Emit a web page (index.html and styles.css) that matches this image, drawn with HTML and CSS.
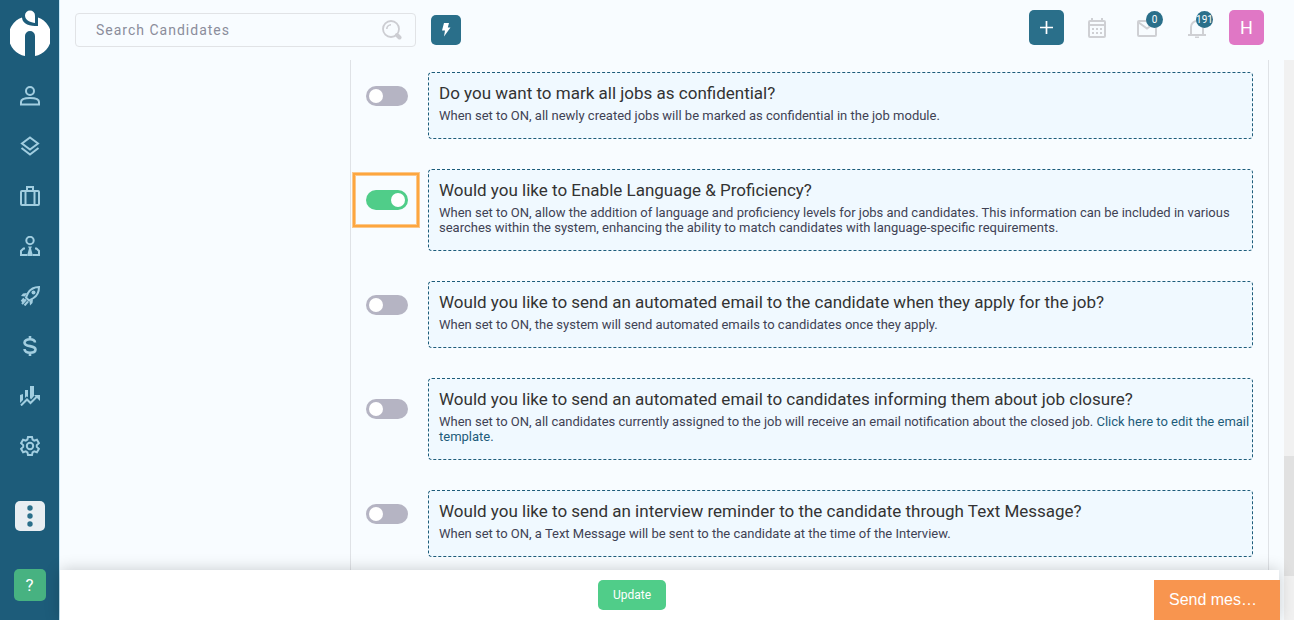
FILE: index.html
```html
<!DOCTYPE html>
<html lang="en">
<head>
  <meta charset="UTF-8">
  <meta name="viewport" content="width=device-width, initial-scale=1.0">
  <title>Settings</title>
  <link rel="stylesheet" href="styles.css">
</head>
<body>

<aside class="sidebar">
  <a class="logo" href="#" aria-label="Home">
    <svg width="40" height="46" viewBox="0 0 40 46">
      <path fill="#fff" d="M12 7.500A20 20 0 0 0 15 46V26a5 5 0 0 1 10 0v20A20 20 0 0 0 28 7.500V16C20 16 12.500 14.500 12 7.500z"/>
      <path fill="#fff" d="M20 .5a5 5 0 0 1 5 5v7.500c-4-.5-10-2.500-10-7.500a5 5 0 0 1 5-5z"/>
    </svg>
  </a>
  <nav class="menu">
    <a href="#" aria-label="Candidates">
      <svg class="icon" viewBox="0 0 20 20"><circle cx="10" cy="5" r="4"/><path d="M1 18.500v-2.500c0-2.500 4-4 9-4s9 1.500 9 4v2.500z"/></svg>
    </a>
    <a href="#" aria-label="Pipelines">
      <svg class="icon" viewBox="0 0 20 20"><path d="M10 1.500l8 6-8 6-8-6zM1.500 12l8.500 6.500L18.500 12"/></svg>
    </a>
    <a href="#" aria-label="Jobs">
      <svg class="icon" viewBox="0 0 20 20"><rect x="1" y="5" width="18" height="14" rx="1"/><path d="M7 5V1h6v4M5.500 5v14M14.500 5v14"/></svg>
    </a>
    <a href="#" aria-label="Clients">
      <svg class="icon" viewBox="0 0 20 20"><circle cx="10" cy="4.500" r="3.700"/><path d="M5 12.500H3.500L1 15v4h6.500M15 12.500h1.500L19 15v4h-6.500"/><path class="solid" d="M8 10.500h4l-1 2 1.500 5.500V20h-5v-2L9 12.500z"/></svg>
    </a>
    <a href="#" aria-label="Campaigns">
      <svg class="icon" viewBox="0 0 20 20"><path d="M19 1c-5 0-8.500 2-11 6l-2 4.500 3 3 4.500-2.500C17.500 9.500 19 6 19 1zM6 13.500L2 18M4 12.500l-2.500 3M8 15.500L4.500 19.500"/><circle class="solid" cx="13.500" cy="6.500" r="2"/><path class="solid" d="M7 7L3 7.500 1 10l4 .5zM13 13l-.5 4-2.500 2.500-.5-4.500z"/></svg>
    </a>
    <a href="#" aria-label="Billing">
      <svg class="icon" viewBox="0 0 20 20"><path class="thick" d="M15 6.500C15 4.500 13 3.300 10 3.300S4.500 4.500 4.500 6.700c0 4.800 11 2 11 6.800 0 2-2.500 3.200-5.500 3.200s-5.500-1.200-5.500-3.700M10 0v3.500M10 16.500V20"/></svg>
    </a>
    <a href="#" aria-label="Reports">
      <svg class="icon" viewBox="0 0 20 20"><path class="solid" d="M0 9l3-1v6l-3 3zM5 4h3v7l-1.500-.5L5 12zM10 0h4v10l-3 3.500L10 12z"/><path d="M1 19.500l6-6 3.500 3.500 7-7"/><path class="solid" d="M14 9h6v6z"/></svg>
    </a>
    <a href="#" aria-label="Settings">
      <svg class="icon" viewBox="0 0 20 20"><circle cx="10" cy="10" r="3.200"/><path d="M8 1h4l.6 2.700 1.600 1 2.700-.9 2 3.400-2.100 1.900v1.800l2.100 1.900-2 3.400-2.700-.9-1.600 1L12 19H8l-.6-2.700-1.600-1-2.700.9-2-3.400 2.100-1.900V9.100L1.100 7.200l2-3.400 2.700.9 1.600-1z"/></svg>
    </a>
  </nav>
  <button class="more" aria-label="More">
    <svg width="6" height="24" viewBox="0 0 6 24"><circle cx="3" cy="4" r="2.700"/><circle cx="3" cy="12" r="2.700"/><circle cx="3" cy="20" r="2.700"/></svg>
  </button>
  <button class="help">?</button>
</aside>

<div class="page">
  <header class="topbar">
    <form class="search">
      <input type="text" placeholder="Search Candidates" aria-label="Search Candidates">
      <svg width="20" height="20" viewBox="0 0 20 20" fill="none" stroke="#cccdd2"><circle cx="9" cy="9" r="8" stroke-width="1.800"/><path d="M4.800 9A4.300 4.300 0 0 1 9 4.800" stroke-width="1.600"/><path d="M15 15L17.500 17.500" stroke-width="4" stroke-linecap="round"/></svg>
    </form>
    <button class="quick" aria-label="Quick search">
      <svg width="10" height="14" viewBox="0 0 10 14"><path fill="#fff" d="M3 0h5L6.800 4.500H9.500L3 13.500 4 7.500H1z"/></svg>
    </button>
    <div class="actions">
      <button class="add" aria-label="Add">
        <svg width="15" height="15" viewBox="0 0 15 15"><path d="M7.500 1v13M1 7.500h13" stroke="#fff" stroke-width="1.700"/></svg>
      </button>
      <button class="tool" aria-label="Calendar">
        <svg width="20" height="20" viewBox="0 0 20 20"><rect x="2" y="3" width="16" height="16" rx="1"/><path d="M2 7h16M5 0v3M15 0v3"/><path d="M5 11h10M5 15h10" stroke-dasharray="2 2"/></svg>
      </button>
      <button class="tool" aria-label="Messages">
        <svg width="20" height="20" viewBox="0 0 20 20"><rect x="1" y="3" width="18" height="15" rx="1"/><path d="M1 4l9 6.500L19 4"/></svg>
        <span class="badge">0</span>
      </button>
      <button class="tool" aria-label="Notifications">
        <svg width="20" height="20" viewBox="0 0 20 20"><path d="M1 17h18M4 17V9a6 6 0 0 1 12 0v8M8 19.500h4"/></svg>
        <span class="badge">191</span>
      </button>
      <button class="avatar">H</button>
    </div>
  </header>

  <div class="body">
    <div class="content">
      <main class="panel">
        <div class="settings">
          <div class="setting">
            <input class="switch" type="checkbox" id="confidential">
            <div class="box">
              <label for="confidential">Do you want to mark all jobs as confidential?</label>
              <p>When set to ON, all newly created jobs will be marked as confidential in the job module.</p>
            </div>
          </div>
          <div class="setting">
            <span class="highlight"><input class="switch" type="checkbox" id="language" checked></span>
            <div class="box">
              <label for="language">Would you like to Enable Language &amp; Proficiency?</label>
              <p>When set to ON, allow the addition of language and proficiency levels for jobs and candidates. This information can be included in various searches within the system, enhancing the ability to match candidates with language-specific requirements.</p>
            </div>
          </div>
          <div class="setting">
            <input class="switch" type="checkbox" id="apply">
            <div class="box">
              <label for="apply">Would you like to send an automated email to the candidate when they apply for the job?</label>
              <p>When set to ON, the system will send automated emails to candidates once they apply.</p>
            </div>
          </div>
          <div class="setting">
            <input class="switch" type="checkbox" id="closure">
            <div class="box">
              <label for="closure">Would you like to send an automated email to candidates informing them about job closure?</label>
              <p>When set to ON, all candidates currently assigned to the job will receive an email notification about the closed job. <a href="#">Click here to edit the email template.</a></p>
            </div>
          </div>
          <div class="setting">
            <input class="switch" type="checkbox" id="reminder">
            <div class="box">
              <label for="reminder">Would you like to send an interview reminder to the candidate through Text Message?</label>
              <p>When set to ON, a Text Message will be sent to the candidate at the time of the Interview.</p>
            </div>
          </div>
        </div>
      </main>
      <footer class="footer">
        <button class="update">Update</button>
      </footer>
    </div>
    <div class="scrollbar"><div class="thumb"></div></div>
  </div>
</div>

<button class="chat">Send mes…</button>

</body>
</html>
```
FILE: styles.css
```css
* {
  box-sizing: border-box;
}

body {
  margin: 0;
  height: 100vh;
  display: flex;
  overflow: hidden;
  font-family: Roboto, sans-serif;
  background-color: #f8fcff;
  color: #333;
}

button {
  display: flex;
  align-items: center;
  justify-content: center;
  padding: 0;
  border: none;
  border-radius: 5px;
  font-family: inherit;
  cursor: pointer;
}

a {
  color: #1d5c7a;
  text-decoration: none;
}

/* sidebar */
.sidebar {
  flex: none;
  width: 60px;
  display: flex;
  flex-direction: column;
  align-items: center;
  padding: 10px 0 19px;
  background-color: #1d5c7a;
  border-right: 1px solid #c8eafa;
}

.logo,
.logo svg {
  display: block;
}

.menu {
  margin: 15px 0 30px;
}

.menu a {
  height: 50px;
  display: flex;
  align-items: center;
}

.icon {
  width: 20px;
  height: 20px;
  fill: none;
  stroke: #a2cee0;
  stroke-width: 2;
}

.icon .solid {
  fill: #a2cee0;
  stroke: none;
}

.icon .thick {
  stroke-width: 2.6;
}

.more {
  width: 30px;
  height: 30px;
  background-color: #e8eef2;
}

.more svg {
  fill: #2a6f8a;
}

.help {
  width: 32px;
  height: 32px;
  margin-top: auto;
  background-color: #47b281;
  color: #fff;
  font-size: 17px;
}

/* top bar */
.page {
  flex: 1;
  min-width: 0;
  display: flex;
  flex-direction: column;
}

.topbar {
  flex: none;
  height: 60px;
  display: flex;
  align-items: center;
  gap: 15px;
  padding: 0 30px 0 15px;
}

.search {
  width: 341px;
  height: 34px;
  display: flex;
  align-items: center;
  padding: 0 13px 0 20px;
  border: 1px solid #e1e3e6;
  border-radius: 4px;
}

.search input {
  flex: 1;
  min-width: 0;
  padding: 0;
  border: none;
  outline: none;
  background: none;
  font-family: inherit;
  font-size: 14px;
  letter-spacing: 1px;
}

.search input::placeholder {
  color: #8b8d9b;
}

.quick {
  width: 30px;
  height: 30px;
  background-color: #2a6f8a;
}

.actions {
  display: flex;
  gap: 15px;
  margin: 0 0 5px auto;
}

.add,
.tool,
.avatar {
  width: 35px;
  height: 35px;
}

.add {
  background-color: #2a6f8a;
}

.tool {
  position: relative;
  background: none;
}

.tool svg {
  fill: none;
  stroke: #cfd0d4;
  stroke-width: 2;
}

.badge {
  position: absolute;
  top: 1px;
  right: 1px;
  width: 17px;
  height: 17px;
  display: flex;
  align-items: center;
  justify-content: center;
  border-radius: 50%;
  background-color: #2a6f8a;
  color: #fff;
  font-size: 10px;
}

.avatar {
  background-color: #e077c5;
  color: #fff;
  font-size: 18px;
}

/* settings list */
.body {
  flex: 1;
  min-height: 0;
  display: flex;
}

.content {
  flex: 1;
  min-width: 0;
  display: flex;
  flex-direction: column;
}

.panel {
  flex: 1;
  min-height: 0;
  display: flex;
  padding: 0 15px 0 290px;
  overflow: hidden;
}

.settings {
  flex: 1;
  display: flex;
  flex-direction: column;
  gap: 30px;
  padding: 12px 15px;
  border: solid #dfe2e6;
  border-width: 0 1px;
}

.setting {
  display: flex;
  align-items: center;
  gap: 20px;
}

.switch {
  appearance: none;
  flex: none;
  display: block;
  width: 42px;
  height: 20px;
  margin: 0 0 20px;
  padding: 3px;
  border-radius: 10px;
  background-color: #b5b4c3;
  cursor: pointer;
}

.switch::before {
  content: "";
  display: block;
  width: 14px;
  height: 14px;
  border-radius: 50%;
  background-color: #fff;
}

.switch:checked {
  background-color: #50cd89;
}

.switch:checked::before {
  margin-left: auto;
}

.highlight {
  position: relative;
}

.highlight::after {
  content: "";
  position: absolute;
  inset: -17px -11px 3px -13px;
  border: 2px solid #fda63f;
  box-shadow: 0 0 0 1px #fbc88c, inset 0 0 0 1px #fbc88c;
  pointer-events: none;
}

.box {
  flex: 1;
  padding: 10px 0 15px 10px;
  border: 1px dashed #1d5c7a;
  border-radius: 4px;
  background-color: #f0f9ff;
}

.box label {
  display: block;
  font-size: 17px;
  line-height: 20px;
}

.box p {
  margin: 5px 0 0;
  font-size: 13px;
  line-height: 15px;
  color: #3f4254;
}

/* footer */
.footer {
  position: relative;
  flex: none;
  height: 50px;
  display: flex;
  align-items: center;
  justify-content: center;
  margin-right: 5px;
  padding-right: 75px;
  background-color: #fff;
  box-shadow: 0 0 15px rgba(0, 0, 0, 0.2);
}

.update {
  height: 30px;
  padding: 0 15px;
  background-color: #50cd89;
  color: #fff;
  font-size: 12px;
}

.scrollbar {
  width: 10px;
  display: flex;
  flex-direction: column;
  justify-content: flex-end;
  padding-bottom: 44px;
  background-color: #f1f1f1;
}

.thumb {
  height: 120px;
  background-color: #e1e1e1;
}

.chat {
  position: fixed;
  right: 14px;
  bottom: 0;
  height: 40px;
  padding: 0 23px 0 15px;
  border-radius: 0;
  background-color: #f8954f;
  color: #fff;
  font-family: "Liberation Sans", Arial, sans-serif;
  font-size: 16px;
}
```
